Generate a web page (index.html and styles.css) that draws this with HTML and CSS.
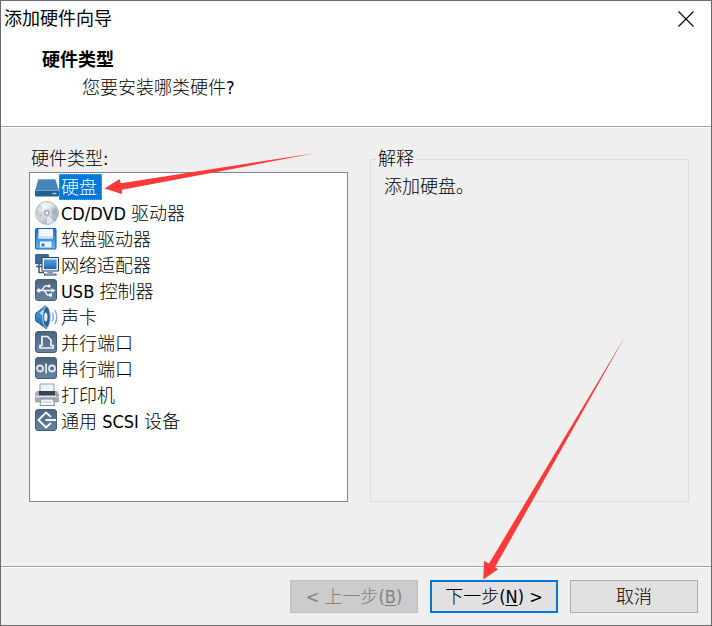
FILE: index.html
```html
<!DOCTYPE html>
<html lang="zh-CN">
<head>
    <meta charset="UTF-8">
    <meta name="viewport" content="width=device-width, initial-scale=1.0">
    <title>添加硬件向导</title>
    <link rel="stylesheet" href="styles.css">
</head>
<body>
    <svg class="defs" width="0" height="0" aria-hidden="true">
        <defs>
            <linearGradient id="tile" x1="0" y1="0" x2="0" y2="1">
                <stop offset="0" stop-color="#4c667f"/><stop offset="1" stop-color="#6583a0"/>
            </linearGradient>
            <linearGradient id="blue" x1="0" y1="0" x2="0" y2="1">
                <stop offset="0" stop-color="#5aa0dc"/><stop offset="1" stop-color="#1c65b4"/>
            </linearGradient>
            <linearGradient id="floppy" x1="0" y1="0" x2="0" y2="1">
                <stop offset="0" stop-color="#1f6fd0"/><stop offset="1" stop-color="#5db4f6"/>
            </linearGradient>
            <linearGradient id="silver" x1="0" y1="0" x2="1" y2="1">
                <stop offset="0" stop-color="#a9b0b8"/><stop offset=".35" stop-color="#eceff2"/>
                <stop offset=".6" stop-color="#c3c8d0"/><stop offset="1" stop-color="#9aa2ad"/>
            </linearGradient>
        </defs>
    </svg>

    <div class="dialog">
        <header class="header">
            <div class="titlebar">
                <span class="title">添加硬件向导</span>
                <button class="close-btn" type="button" aria-label="关闭">
                    <svg width="16" height="16" viewBox="0 0 16 16"><path d="M.5.5l15 15M15.5.5l-15 15" stroke="#000" stroke-width="1.1"/></svg>
                </button>
            </div>
            <h1 class="heading">硬件类型</h1>
            <p class="subheading">您要安装哪类硬件?</p>
        </header>

        <main class="content">
            <section class="types">
                <div class="types-label" id="types-label">硬件类型:</div>
                <ul class="list" role="listbox" tabindex="0" aria-labelledby="types-label">
                    <li class="item selected" role="option" aria-selected="true">
                        <svg class="icon" viewBox="0 0 24 24">
                            <path d="M4.500 4h14.500q1.200 0 1.700 1.300L24 15.500H0L3 5.300Q3.400 4 4.500 4z" fill="#4686b8"/>
                            <path d="M4.500 4h14.500q1.200 0 1.500 1.100H3.100Q3.500 4 4.500 4z" fill="#79acd3"/>
                            <path d="M0 15h24v5.500q0 1-1 1H1q-1 0-1-1z" fill="#235f91"/>
                            <path d="M0 15.500h24" stroke="#6ba2cd"/>
                            <path d="M17.500 18.500h4" stroke="#7ed0ff" stroke-width="1.500"/>
                        </svg>
                        <span class="item-text">硬盘</span>
                    </li>
                    <li class="item" role="option">
                        <svg class="icon" viewBox="0 0 24 24">
                            <circle cx="12" cy="12" r="11.400" fill="url(#silver)" stroke="#a3abb5" stroke-width=".8"/>
                            <path d="M12 12L5 3.200Q8 1 12 1zM12 12l7 8.800Q16 23 12 23z" fill="#fff" opacity=".6"/>
                            <path d="M12 12L1.500 10Q1.300 15 3.500 18zM12 12L22.500 14Q22.700 9 20.500 6z" fill="#7f8995" opacity=".3"/>
                            <circle cx="12" cy="12" r="4.200" fill="#b4bfca" stroke="#eef1f4"/>
                            <circle cx="12" cy="12" r="1.800" fill="#fff" stroke="#a4b0bd"/>
                        </svg>
                        <span class="item-text">CD/DVD 驱动器</span>
                    </li>
                    <li class="item" role="option">
                        <svg class="icon" viewBox="0 0 24 24">
                            <path d="M.5 2.500q0-1 1-1h18.500q1 0 1 1V21q0 1-1 1H1.500q-1 0-1-1z" fill="url(#floppy)" stroke="#1d5eae"/>
                            <path d="M3.500 2h14.500v9.500H3.500z" fill="#f4f7fb"/>
                            <path d="M3.500 9h14.500v2.500H3.500z" fill="#d3e0ef"/>
                            <path d="M5 14.500h11.500V20.500H5z" fill="#ecf1f6"/>
                            <path d="M6.500 16.500h3v3h-3z" fill="#2f79c8"/>
                        </svg>
                        <span class="item-text">软盘驱动器</span>
                    </li>
                    <li class="item" role="option">
                        <svg class="icon" viewBox="0 0 24 24">
                            <path d="M.7 1.700h12.600v9H.7z" fill="#356f9f" stroke="#24517a"/>
                            <path d="M4 11v8.500h5M1 13.500h6" fill="none" stroke="#315d83" stroke-width="1.500"/>
                            <path d="M7 4.500h16.500v13.500H7z" fill="#e6edf3" stroke="#28445f"/>
                            <path d="M9 6.500h12.500v9.500H9z" fill="url(#blue)"/>
                            <path d="M12.500 18.500h5.500v2h-5.500z" fill="#7890a5"/>
                            <path d="M9 21.500h12.500" stroke="#28445f" stroke-width="2"/>
                            <path d="M10 21h10.500" stroke="#cbd6df"/>
                        </svg>
                        <span class="item-text">网络适配器</span>
                    </li>
                    <li class="item" role="option">
                        <svg class="icon" viewBox="0 0 24 24">
                            <rect x=".5" y=".5" width="21" height="21" rx="2.500" fill="url(#tile)" stroke="#465e76"/>
                            <g fill="none" stroke="#eef2f5" stroke-width="1.400">
                                <path d="M3 11.500h14M6.500 11.500l3.500-4.500h3.500M9 11.500l3.500 4.500h2.500"/>
                            </g>
                            <circle cx="3.800" cy="11.500" r="2" fill="#fff"/>
                            <circle cx="14" cy="7" r="1.600" fill="#fff"/>
                            <path d="M14 14.500h3v3h-3zM16.500 9.200l4 2.300-4 2.300z" fill="#fff"/>
                        </svg>
                        <span class="item-text">USB 控制器</span>
                    </li>
                    <li class="item" role="option">
                        <svg class="icon" viewBox="0 0 24 24">
                            <path d="M.5 9.500q0-2 2-2.500L10 1q3.500-.5 4.500 11-.5 11-3.500 11.500L3 17.500Q.5 17 .5 14.500z" fill="url(#blue)" stroke="#285b8e"/>
                            <path d="M4.500 8l6-5q-2.500 4-2 9z" fill="#b9dcf5"/>
                            <ellipse cx="11.500" cy="12" rx="3.800" ry="10.500" fill="#28629c" stroke="#b5d4ec"/>
                            <ellipse cx="10.800" cy="12" rx="1.700" ry="4.500" fill="#dceefa"/>
                            <path d="M17 7.500q2.800 4.500 0 9M19.800 5q4 7 0 14" fill="none" stroke="#8aa9cc" stroke-width="1.400"/>
                        </svg>
                        <span class="item-text">声卡</span>
                    </li>
                    <li class="item" role="option">
                        <svg class="icon" viewBox="0 0 24 24">
                            <rect x=".5" y=".5" width="21" height="21" rx="2.500" fill="url(#tile)" stroke="#465e76"/>
                            <path d="M7 14.500V5.500h5.500l3.500 3.500v5.500M7.800 14.500H5v2.500h13v-2.500h-2.800" fill="none" stroke="#f3f5f7" stroke-width="1.700"/>
                        </svg>
                        <span class="item-text">并行端口</span>
                    </li>
                    <li class="item" role="option">
                        <svg class="icon" viewBox="0 0 24 24">
                            <rect x=".5" y=".5" width="21" height="21" rx="2.500" fill="url(#tile)" stroke="#465e76"/>
                            <g fill="none" stroke="#e4e9ee" stroke-width="1.800">
                                <circle cx="5" cy="11.500" r="3"/>
                                <circle cx="17" cy="11.500" r="3"/>
                                <path d="M11 6.500v10"/>
                            </g>
                        </svg>
                        <span class="item-text">串行端口</span>
                    </li>
                    <li class="item" role="option">
                        <svg class="icon" viewBox="0 0 24 24">
                            <path d="M5 1h14v9H5z" fill="#eef1f6" stroke="#9a9fab"/>
                            <path d="M2 8h20q2 1.500 2 4v6q0 1.500-1.500 1.500h-21Q0 19.500 0 18v-6q0-2.500 2-4z" fill="#a6a7b7"/>
                            <path d="M4 8h16v4.500H4z" fill="#3b4250"/>
                            <path d="M.5 13.500h23" stroke="#e3e4ec" stroke-width="1.500"/>
                            <path d="M6 16h12.500l1 6.500H5z" fill="#f5f7fb" stroke="#8a8ea0"/>
                            <path d="M7.500 19h9.500" stroke="#b9c3d4"/>
                            <path d="M21 12.500h2" stroke="#44b95c" stroke-width="2"/>
                        </svg>
                        <span class="item-text">打印机</span>
                    </li>
                    <li class="item" role="option">
                        <svg class="icon" viewBox="0 0 24 24">
                            <rect x=".5" y=".5" width="21" height="21" rx="2.500" fill="url(#tile)" stroke="#465e76"/>
                            <path d="M16 8l-5-4.500-7.500 7.500 7.500 7.500 5-4.500M10.500 11H21" fill="none" stroke="#f3f5f7" stroke-width="1.900"/>
                        </svg>
                        <span class="item-text">通用 SCSI 设备</span>
                    </li>
                </ul>
            </section>

            <fieldset class="explain">
                <legend>解释</legend>
                <p class="explain-text">添加硬盘。</p>
            </fieldset>
        </main>

        <footer class="footer">
            <button class="btn" type="button" disabled>&lt; 上一步(<u>B</u>)</button>
            <button class="btn btn-default" type="button">下一步(<u>N</u>) &gt;</button>
            <button class="btn" type="button">取消</button>
        </footer>
    </div>

    <!-- pointers to the selected type and the next button -->
    <svg class="arrows" width="712" height="626" viewBox="0 0 712 626" aria-hidden="true">
        <path d="M104.500 188.500L119.500 179l1.300 4.300L316 153 122 189.800l-.3 4.200z"/>
        <path d="M483.300 579.500L484 561l5 2.500L626 335 495 567l3 2.200z"/>
    </svg>
</body>
</html>
```

FILE: styles.css
```css
* {
    box-sizing: border-box;
}
body {
    margin: 0;
    position: relative;
    background-color: #efefef;
    color: #000;
    font-family: "DejaVu Sans Condensed", "Noto Sans CJK SC", sans-serif;
    font-size: 18px;
    font-weight: 300;
    line-height: 26px;
}
.defs {
    position: absolute;
}
.dialog {
    display: flex;
    flex-direction: column;
    min-height: 100vh;
    border: 1px solid #6b6b6b;
}
.header {
    background-color: #fff;
    border-bottom: 1px solid #a0a0a0;
    padding-bottom: 25px;
}
.titlebar {
    display: flex;
    justify-content: space-between;
    align-items: center;
    height: 36px;
    padding: 0 17px 0 3px;
}
.title {
    font-weight: 400;
}
.close-btn {
    display: flex;
    padding: 0;
    border: none;
    background: none;
}
.heading {
    margin: 10px 0 2px 41px;
    font-size: 18px;
    font-weight: bold;
}
.subheading {
    margin: 0 0 0 81px;
}
.content {
    flex: 1;
    display: grid;
    grid-template-columns: 1fr 1fr;
    gap: 22px;
    padding: 18px 22px 64px 28px;
    border-top: 1px solid #fff;
}
.types {
    display: flex;
    flex-direction: column;
}
.types-label {
    padding-left: 2px;
}
.list {
    flex: 1;
    margin: 0;
    padding: 1px 5px;
    list-style: none;
    background-color: #fff;
    border: 1px solid #828790;
    outline: none;
}
.item {
    display: flex;
    align-items: center;
}
.icon {
    width: 24px;
    height: 24px;
}
.item-text {
    padding: 2px 5px 0 2px;
    line-height: 24px;
}
.selected .item-text {
    background-color: #0078d7;
    color: #fff;
    outline: 1px dotted #f08a28;
    outline-offset: -1px;
}
.explain {
    margin: 0;
    min-width: 0;
    padding: 0 13px;
    border: 1px solid #dcdcdc;
}
.explain legend {
    margin-left: -8px;
    padding: 0 2px;
}
.explain-text {
    margin: 2px 0 0;
}
.footer {
    display: flex;
    justify-content: flex-end;
    gap: 12px;
    padding: 13px 13px 12px;
    border-top: 1px solid #a0a0a0;
    box-shadow: inset 0 1px #fff;
}
.btn {
    width: 128px;
    height: 33px;
    padding: 0;
    border: 1px solid #adadad;
    background-color: #e1e1e1;
    color: #000;
    font: inherit;
}
.btn u {
    text-underline-offset: 2px;
}
.btn-default {
    border: 2px solid #0078d7;
}
.btn:disabled {
    border-color: #bfbfbf;
    background-color: #ccc;
    color: #838383;
}
.arrows {
    position: absolute;
    top: 0;
    left: 0;
    fill: #fc3a38;
    pointer-events: none;
}
```
